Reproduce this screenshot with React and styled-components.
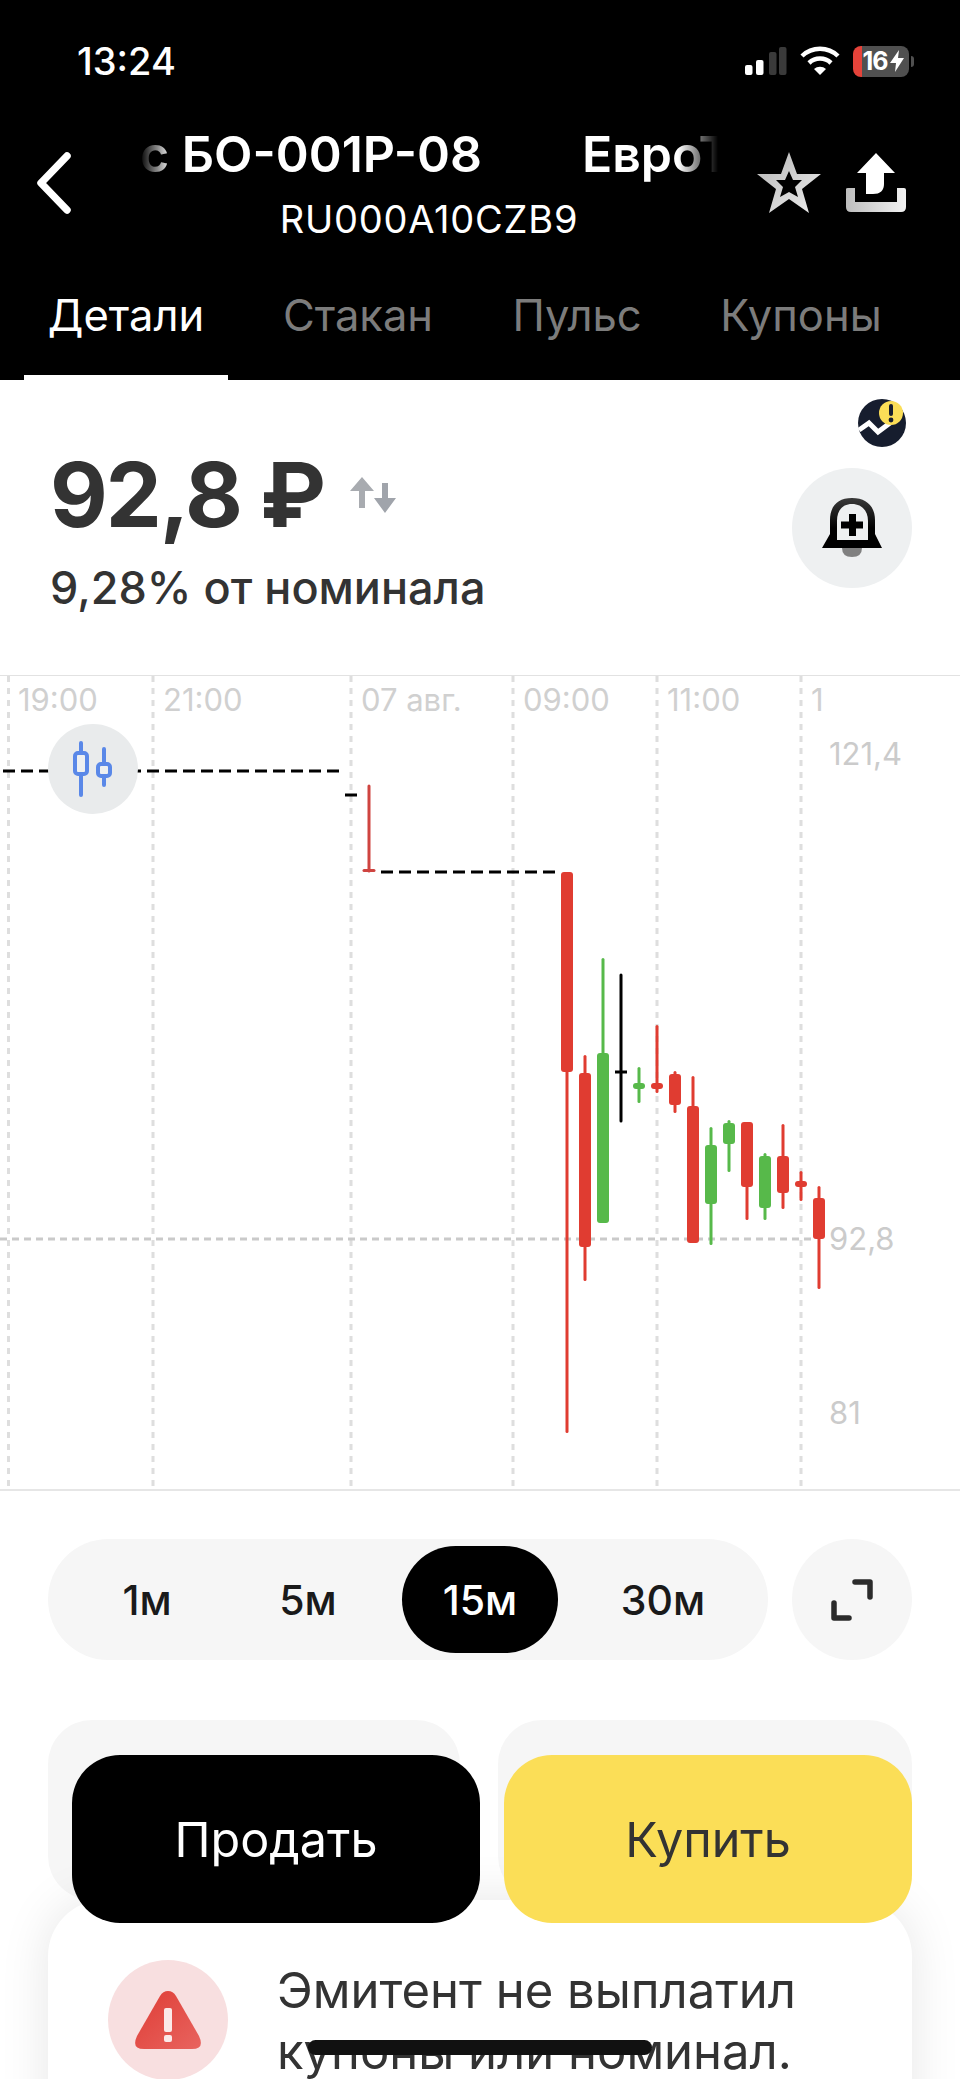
import React from 'react';
import styled, { createGlobalStyle } from 'styled-components';

const GlobalStyle = createGlobalStyle`
  html, body { margin: 0; padding: 0; background: #fff; }
  * { box-sizing: border-box; }
`;

const Page = styled.div`
  position: relative;
  width: 960px;
  height: 2079px;
  overflow: hidden;
  background: #fff;
  font-family: Inter, Roboto, "Noto Sans", sans-serif;
  color: #333;
`;

const Header = styled.header`
  height: 380px;
  background: #000;
  color: #fff;
  display: flex;
  flex-direction: column;
`;

const StatusBar = styled.div`
  height: 118px;
  padding: 40px 46px 0 77px;
  display: flex;
  justify-content: space-between;
  align-items: flex-start;
`;

const Time = styled.div`
  font-size: 38px;
  font-weight: 500;
  line-height: 42px;
`;

const StatusIcons = styled.div`
  display: flex;
  align-items: center;
  gap: 13px;
  height: 42px;
`;

const Battery = styled.div`
  position: relative;
  width: 56px;
  height: 31px;
  margin-right: 5px;
  border-radius: 8px;
  background: linear-gradient(90deg, #e5433a 0 9px, #505050 9px);
  display: flex;
  align-items: center;
  justify-content: center;
  gap: 2px;
  padding-left: 4px;
  font-size: 25px;
  font-weight: 700;
  letter-spacing: -1px;
  color: #fff;

  &::after {
    content: '';
    position: absolute;
    right: -5px;
    top: 10px;
    width: 3px;
    height: 11px;
    border-radius: 0 3px 3px 0;
    background: #505050;
  }
`;

const NavRow = styled.div`
  height: 130px;
  display: flex;
  align-items: center;
  padding: 0 54px 0 36px;
`;

const BackButton = styled.div`
  width: 104px;
  display: flex;
  align-items: center;
`;

const TitleBlock = styled.div`
  width: 578px;
  flex: none;
  display: flex;
  flex-direction: column;
  align-items: center;
`;

const Marquee = styled.div`
  width: 100%;
  height: 58px;
  overflow: hidden;
  white-space: nowrap;
  font-size: 50px;
  font-weight: 600;
  line-height: 58px;
  display: flex;
  gap: 100px;
  padding-left: 0;
  -webkit-mask-image: linear-gradient(90deg, transparent 0, #000 32px, #000 calc(100% - 40px), transparent 100%);
  mask-image: linear-gradient(90deg, transparent 0, #000 32px, #000 calc(100% - 40px), transparent 100%);
`;

const Isin = styled.div`
  font-size: 38px;
  line-height: 44px;
  margin-top: 14px;
  letter-spacing: 0.8px;
`;

const NavActions = styled.div`
  flex: 1;
  display: flex;
  justify-content: flex-end;
  align-items: center;
  gap: 24px;
`;

const Tabs = styled.nav`
  flex: 1;
  display: flex;
  align-items: stretch;
  padding-left: 24px;
`;

const Tab = styled.div`
  width: ${p => p.$width}px;
  padding-top: 39px;
  text-align: center;
  font-size: 43.5px;
  line-height: 56px;
  color: ${p => (p.$active ? '#fff' : '#7c7c7c')};
  border-bottom: 5px solid ${p => (p.$active ? '#fff' : 'transparent')};
`;

const Quote = styled.section`
  position: relative;
  height: 296px;
  padding: 65px 48px 0 50px;
  border-bottom: 1px solid #e2e2e2;
  display: flex;
  justify-content: space-between;
`;

const PriceRow = styled.div`
  display: flex;
  align-items: center;
  gap: 26px;
`;

const Price = styled.div`
  font-size: 89px;
  font-weight: 700;
  line-height: 100px;
  letter-spacing: -2px;
  color: #333;
`;

const Nominal = styled.div`
  margin-top: 17px;
  font-size: 45px;
  font-weight: 500;
  line-height: 52px;
`;

const AlertButton = styled.div`
  width: 120px;
  height: 120px;
  margin-top: 23px;
  border-radius: 50%;
  background: #eef0f1;
  display: flex;
  align-items: center;
  justify-content: center;
`;

const RiskBadge = styled.div`
  position: absolute;
  top: 19px;
  right: 54px;
  width: 48px;
  height: 48px;
`;

const ChartArea = styled.section`
  position: relative;
  height: 815px;
  border-bottom: 2px solid #e6e6e6;
`;

const ChartToggle = styled.div`
  position: absolute;
  left: 48px;
  top: 48px;
  width: 90px;
  height: 90px;
  border-radius: 50%;
  background: #e9ebec;
  display: flex;
  align-items: center;
  justify-content: center;
`;

const Controls = styled.div`
  display: flex;
  gap: 24px;
  padding: 48px 48px 0;
`;

const Periods = styled.div`
  width: 720px;
  height: 121px;
  border-radius: 61px;
  background: #f6f6f6;
  display: grid;
  grid-template-columns: 134px 188px 156px 210px;
  padding: 7px 0 7px 32px;
`;

const Period = styled.div`
  display: flex;
  align-items: center;
  justify-content: center;
  border-radius: 54px;
  font-size: 41px;
  font-weight: 500;
  color: ${p => (p.$active ? '#fff' : '#1a1a1a')};
  background: ${p => (p.$active ? '#000' : 'transparent')};
`;

const ExpandButton = styled.div`
  width: 120px;
  height: 121px;
  border-radius: 50%;
  background: #f6f6f6;
  display: flex;
  align-items: center;
  justify-content: center;
`;

const Cards = styled.div`
  display: grid;
  grid-template-columns: 412px 414px;
  column-gap: 38px;
  padding: 60px 48px 0;
`;

const Card = styled.div`
  height: 180px;
  border-radius: 44px;
  background: #f6f6f6;
`;

const WarningCard = styled.div`
  height: 240px;
  margin: 0 48px;
  padding: 60px 60px 0;
  border-radius: 56px 56px 0 0;
  background: #fff;
  box-shadow: 0 0 50px rgba(0, 0, 0, 0.1);
  display: flex;
  gap: 49px;
  position: relative;
`;

const WarningIcon = styled.div`
  flex: none;
  width: 120px;
  height: 120px;
  border-radius: 50%;
  background: #f8dfe0;
  display: flex;
  align-items: center;
  justify-content: center;
`;

const WarningText = styled.div`
  font-size: 49px;
  line-height: 61px;
  white-space: nowrap;
  color: #333;
`;

const TradeBar = styled.div`
  position: absolute;
  left: 72px;
  top: 1755px;
  width: 840px;
  display: grid;
  grid-template-columns: 1fr 1fr;
  gap: 24px;
`;

const TradeButton = styled.div`
  height: 168px;
  border-radius: 48px;
  display: flex;
  align-items: center;
  justify-content: center;
  font-size: 48.5px;
  color: ${p => (p.$buy ? '#333' : '#fff')};
  background: ${p => (p.$buy ? '#fbde57' : '#000')};
`;

const HomeIndicator = styled.div`
  position: absolute;
  left: 308px;
  top: 2040px;
  width: 344px;
  height: 15px;
  border-radius: 8px;
  background: #111;
`;

const GRID_X = [8.5, 153, 351, 513, 657, 801];
const TIME_LABELS = [
  { x: 18, text: '19:00' },
  { x: 163, text: '21:00' },
  { x: 361, text: '07 авг.' },
  { x: 523, text: '09:00' },
  { x: 667, text: '11:00' },
  { x: 811, text: '1' },
];
const PRICE_LABELS = [
  { y: 764, text: '121,4' },
  { y: 1249, text: '92,8' },
  { y: 1423, text: '81' },
];

const RED = '#e03c31';
const GREEN = '#57b94a';

// x, wick top, wick bottom, body top, body bottom (page coordinates)
const CANDLES = [
  { x: 567, hi: 871, lo: 1432, top: 871, bottom: 1071, c: RED },
  { x: 585, hi: 1054, lo: 1280, top: 1072, bottom: 1246, c: RED },
  { x: 603, hi: 957, lo: 1222, top: 1052, bottom: 1222, c: GREEN },
  { x: 639, hi: 1066, lo: 1102, top: 1082, bottom: 1088, c: GREEN },
  { x: 657, hi: 1024, lo: 1092, top: 1082, bottom: 1088, c: RED },
  { x: 675, hi: 1070, lo: 1112, top: 1073, bottom: 1104, c: RED },
  { x: 693, hi: 1075, lo: 1242, top: 1105, bottom: 1242, c: RED },
  { x: 711, hi: 1126, lo: 1244, top: 1144, bottom: 1203, c: GREEN },
  { x: 729, hi: 1119, lo: 1171, top: 1122, bottom: 1143, c: GREEN },
  { x: 747, hi: 1121, lo: 1219, top: 1121, bottom: 1186, c: RED },
  { x: 765, hi: 1152, lo: 1219, top: 1155, bottom: 1207, c: GREEN },
  { x: 783, hi: 1123, lo: 1208, top: 1155, bottom: 1192, c: RED },
  { x: 801, hi: 1170, lo: 1200, top: 1180, bottom: 1186, c: RED },
  { x: 819, hi: 1185, lo: 1288, top: 1197, bottom: 1238, c: RED },
];

const CHART_TOP = 675;

const Chart = () => (
  <svg width="960" height="815" viewBox={`0 ${CHART_TOP} 960 815`} style={{ display: 'block' }}>
    {GRID_X.map(x => (
      <line key={x} x1={x} x2={x} y1={CHART_TOP} y2={1485} stroke="#dedede" strokeWidth="3" strokeDasharray="6 6" />
    ))}
    <line x1="0" x2="815" y1="1238" y2="1238" stroke="#cacaca" strokeWidth="3" strokeDasharray="7 5" />
    {TIME_LABELS.map(l => (
      <text key={l.x} x={l.x} y="710" fontSize="31" fill="#d0d0d0" fontFamily="Inter, sans-serif">{l.text}</text>
    ))}
    {PRICE_LABELS.map(l => (
      <text key={l.text} x="829" y={l.y} fontSize="31" fill="#cbcbcb" fontFamily="Inter, sans-serif">{l.text}</text>
    ))}
    <line x1="3" x2="340" y1="770" y2="770" stroke="#000" strokeWidth="3" strokeDasharray="12 6" />
    <line x1="345" x2="357" y1="794" y2="794" stroke="#000" strokeWidth="3" />
    <line x1="369" x2="369" y1="785" y2="870" stroke="#cf4440" strokeWidth="3" strokeLinecap="round" />
    <line x1="364" x2="374" y1="869.5" y2="869.5" stroke="#cf4440" strokeWidth="3" strokeLinecap="round" />
    <line x1="381" x2="556" y1="871" y2="871" stroke="#000" strokeWidth="3" strokeDasharray="12 6" />
    <line x1="621" x2="621" y1="974" y2="1120" stroke="#000" strokeWidth="3" strokeLinecap="round" />
    <line x1="615" x2="627" y1="1071" y2="1071" stroke="#000" strokeWidth="3" />
    {CANDLES.map(k => (
      <g key={k.x} fill={k.c}>
        <rect x={k.x - 1.5} y={k.hi} width="3" height={k.lo - k.hi} rx="1.5" />
        <rect x={k.x - 6} y={k.top} width="12" height={k.bottom - k.top} rx="3" />
      </g>
    ))}
  </svg>
);

export default function App() {
  return (
    <Page>
      <GlobalStyle />
      <Header>
        <StatusBar>
          <Time>13:24</Time>
          <StatusIcons>
            <svg width="42" height="30" viewBox="0 0 42 30">
              <rect x="0" y="19" width="7.5" height="10" rx="2" fill="#fff" />
              <rect x="11" y="14" width="7.5" height="15" rx="2" fill="#fff" />
              <rect x="24" y="6" width="7.5" height="23" rx="2" fill="#3a3a3a" />
              <rect x="34" y="1" width="7.5" height="28" rx="2" fill="#3a3a3a" />
            </svg>
            <svg width="40" height="30" viewBox="0 0 40 30">
              <path d="M2 10 A26 26 0 0 1 38 10" fill="none" stroke="#fff" strokeWidth="4.5" />
              <path d="M9 17 A16 16 0 0 1 31 17" fill="none" stroke="#fff" strokeWidth="4.5" />
              <path d="M14 23 L20 29 L26 23 A9 9 0 0 0 14 23 Z" fill="#fff" />
            </svg>
            <Battery>
              16
              <svg width="14" height="22" viewBox="0 0 14 22">
                <path d="M9 0 L0 13 L6 13 L5 22 L14 8 L8 8 Z" fill="#fff" />
              </svg>
            </Battery>
          </StatusIcons>
        </StatusBar>
        <NavRow>
          <BackButton>
            <svg width="36" height="62" viewBox="0 0 36 62">
              <path d="M31 4 L5 31 L31 58" fill="none" stroke="#fff" strokeWidth="7.5" strokeLinecap="round" strokeLinejoin="round" />
            </svg>
          </BackButton>
          <TitleBlock>
            <Marquee>
              <span>с БО-001Р-08</span>
              <span>ЕвроТ</span>
            </Marquee>
            <Isin>RU000A10CZB9</Isin>
          </TitleBlock>
          <NavActions>
            <svg width="66" height="64" viewBox="0 0 66 64">
              <defs>
                <linearGradient id="metal" x1="0" y1="0" x2="1" y2="1">
                  <stop offset="0" stopColor="#b5b5b5" />
                  <stop offset="1" stopColor="#eeeeee" />
                </linearGradient>
              </defs>
              <path
                fillRule="evenodd"
                fill="url(#metal)"
                d="M33 1 L41 23 L65 23 L46 38 L53 62 L33 48 L13 62 L20 38 L1 23 L25 23 Z M33 20 L29 29 L20 29 L27 36 L24 46 L33 41 L42 46 L39 36 L46 29 L37 29 Z"
              />
            </svg>
            <svg width="60" height="60" viewBox="0 0 60 60">
              <defs>
                <linearGradient id="tray" x1="0" y1="0" x2="1" y2="0">
                  <stop offset="0" stopColor="#bdbdbd" />
                  <stop offset="1" stopColor="#f2f2f2" />
                </linearGradient>
              </defs>
              <path d="M30 0 L49 20 L38 20 L38 31 Q38 41 27 41 L20 41 L20 20 L11 20 Z" fill="#fff" />
              <path d="M0 36 Q0 35 2 35 L9 35 L9 49 L51 49 L51 35 L58 35 Q60 35 60 37 L60 54 Q60 59 55 59 L5 59 Q0 59 0 54 Z" fill="url(#tray)" />
            </svg>
          </NavActions>
        </NavRow>
        <Tabs>
          <Tab $active $width={204}>Детали</Tab>
          <Tab $width={260}>Стакан</Tab>
          <Tab $width={178}>Пульс</Tab>
          <Tab $width={270}>Купоны</Tab>
        </Tabs>
      </Header>

      <Quote>
        <div>
          <PriceRow>
            <Price>92,8 ₽</Price>
            <svg width="46" height="36" viewBox="0 0 46 36">
              <path d="M12 0 L24 14 L15 14 L15 31 L9 31 L9 14 L0 14 Z" fill="#a8abb0" />
              <path d="M35 36 L46 21 L38 21 L38 6 L32 6 L32 21 L24 21 Z" fill="#a0a4ab" />
            </svg>
          </PriceRow>
          <Nominal>9,28% от номинала</Nominal>
        </div>
        <AlertButton>
          <svg width="60" height="60" viewBox="0 0 60 60">
            <defs>
              <linearGradient id="bell" x1="0" y1="0" x2="0" y2="1">
                <stop offset="0" stopColor="#3a3a3a" />
                <stop offset="0.6" stopColor="#000" />
              </linearGradient>
            </defs>
            <path d="M20 50 Q20 59 30 59 Q40 59 40 50 Z" fill="#808080" />
            <path
              fillRule="evenodd"
              fill="url(#bell)"
              d="M30 0 C15 0 8 9 8 22 L8 36 L0 50 L60 50 L53 36 L53 22 C53 9 45 0 30 0 Z M30 6 C20 6 15 13 15 23 L15 42 L46 42 L46 23 C46 13 40 6 30 6 Z"
            />
            <path d="M27 16 H34 V23.5 H41 V30.5 H34 V38 H27 V30.5 H19 V23.5 H27 Z" fill="#000" />
          </svg>
        </AlertButton>
        <RiskBadge>
          <svg width="48" height="48" viewBox="0 0 48 48">
            <circle cx="24" cy="24" r="24" fill="#161d2e" />
            <path d="M1 31 L11 24 L20 33 L32 24" fill="none" stroke="#fff" strokeWidth="5" />
            <circle cx="33" cy="14" r="12" fill="#fbde57" />
            <rect x="31" y="5" width="4" height="12" rx="2" fill="#161d2e" />
            <circle cx="33" cy="21" r="2.4" fill="#161d2e" />
          </svg>
        </RiskBadge>
      </Quote>

      <ChartArea>
        <Chart />
        <ChartToggle>
          <svg width="40" height="56" viewBox="0 0 40 56" fill="#eef0f1" stroke="#5a88e8" strokeWidth="4" strokeLinecap="round">
            <path d="M8 2 V54 M31 8 V44" />
            <rect x="2" y="12" width="12" height="21" rx="3" />
            <rect x="25" y="23" width="12" height="12" rx="3" />
          </svg>
        </ChartToggle>
      </ChartArea>

      <Controls>
        <Periods>
          <Period>1м</Period>
          <Period>5м</Period>
          <Period $active>15м</Period>
          <Period>30м</Period>
        </Periods>
        <ExpandButton>
          <svg width="42" height="42" viewBox="0 0 42 42" fill="none" stroke="#2b2b2b" strokeWidth="5.5" strokeLinecap="round" strokeLinejoin="round">
            <path d="M24 3 H39 V18" />
            <path d="M3 24 V39 H18" />
          </svg>
        </ExpandButton>
      </Controls>

      <Cards>
        <Card />
        <Card />
      </Cards>

      <WarningCard>
        <WarningIcon>
          <svg width="66" height="58" viewBox="0 0 66 58">
            <defs>
              <linearGradient id="warn" x1="0" y1="0" x2="1" y2="1">
                <stop offset="0" stopColor="#df3d36" />
                <stop offset="1" stopColor="#e8645f" />
              </linearGradient>
            </defs>
            <path d="M33 0 Q38 0 41 5 L64 45 Q70 58 57 58 L9 58 Q-4 58 2 45 L25 5 Q28 0 33 0 Z" fill="url(#warn)" />
            <rect x="29" y="17" width="8" height="24" rx="2" fill="#fbe9e9" />
            <rect x="29" y="44" width="8" height="7" rx="2" fill="#fbe9e9" />
          </svg>
        </WarningIcon>
        <WarningText>
          Эмитент не выплатил<br />
          купоны или номинал.
        </WarningText>
      </WarningCard>

      <TradeBar>
        <TradeButton>Продать</TradeButton>
        <TradeButton $buy>Купить</TradeButton>
      </TradeBar>
      <HomeIndicator />
    </Page>
  );
}
